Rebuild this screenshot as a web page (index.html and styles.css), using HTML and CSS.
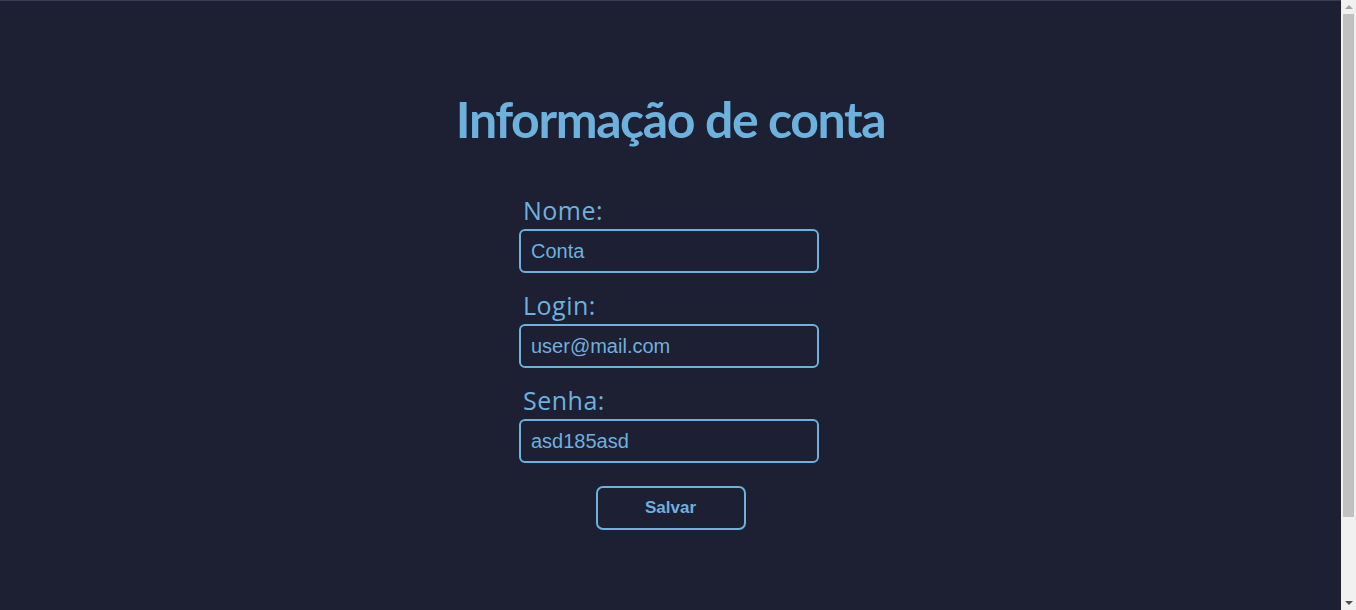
FILE: index.html
```html
<!DOCTYPE html>
<html lang="pt">
<head>
<meta charset="utf-8">
<title>Informação de conta</title>
<link rel="stylesheet" href="styles.css">
</head>
<body>
<main class="page">
  <h1 class="title">Informação de conta</h1>
  <form class="account-form">
    <div class="field">
      <label class="field-label" for="nome">Nome:</label>
      <input class="field-input" id="nome" type="text" value="Conta">
    </div>
    <div class="field">
      <label class="field-label" for="login">Login:</label>
      <input class="field-input" id="login" type="text" value="user@mail.com">
    </div>
    <div class="field">
      <label class="field-label" for="senha">Senha:</label>
      <input class="field-input" id="senha" type="text" value="asd185asd">
    </div>
    <button class="save-button" type="button">Salvar</button>
  </form>
</main>
<div class="scrollbar" aria-hidden="true">
  <div class="scroll-arrow scroll-arrow-up"></div>
  <div class="scroll-track"><div class="scroll-thumb"></div></div>
  <div class="scroll-arrow scroll-arrow-down"></div>
</div>
</body>
</html>
```

FILE: styles.css
```css
html, body {
  margin: 0;
  padding: 0;
  background: #1d1f33;
}
body {
  border-top: 1px solid #3b3d55;
  color: #6db1dd;
  font-family: "Open Sans", "Noto Sans", sans-serif;
}
.page {
  min-height: 705px;
  margin-right: 15px;
  display: flex;
  flex-direction: column;
  align-items: center;
  padding-top: 84px;
  box-sizing: border-box;
}
.title {
  margin: 0;
  font-family: "Lato", "Open Sans", sans-serif;
  font-size: 50px;
  font-weight: 700;
  line-height: 68px;
  letter-spacing: -1.4px;
  color: #6db1dd;
}
.account-form {
  margin-top: 41px;
  display: flex;
  flex-direction: column;
  align-items: center;
}
.field {
  display: flex;
  flex-direction: column;
  width: 300px;
  margin-bottom: 16px;
  margin-right: 3px;
}
.field-label {
  font-size: 25px;
  line-height: 32px;
  letter-spacing: 0.5px;
  padding-left: 4px;
  margin-bottom: 3px;
}
.field-input {
  box-sizing: border-box;
  width: 300px;
  height: 44px;
  border: 2px solid #6db1dd;
  border-radius: 6px;
  background: #1d1f33;
  color: #6db1dd;
  font-family: "Liberation Sans", Arial, sans-serif;
  font-size: 20px;
  padding: 0 10px;
  outline: none;
}
.save-button {
  margin-top: 7px;
  width: 150px;
  height: 44px;
  border: 2px solid #6db1dd;
  border-radius: 7px;
  background: transparent;
  color: #6db1dd;
  font-family: "Liberation Sans", Arial, sans-serif;
  font-weight: 700;
  font-size: 17px;
  cursor: pointer;
}
.scrollbar {
  position: fixed;
  top: 0;
  right: 0;
  bottom: 0;
  width: 15px;
  background: #f1f1f1;
  display: flex;
  flex-direction: column;
}
.scroll-arrow {
  height: 14px;
  flex: none;
  position: relative;
}
.scroll-arrow::after {
  content: "";
  position: absolute;
  left: 4px;
  width: 0;
  height: 0;
  border-left: 4px solid transparent;
  border-right: 4px solid transparent;
}
.scroll-arrow-up::after {
  top: 5px;
  border-bottom: 4px solid #a3a3a3;
}
.scroll-arrow-down::after {
  top: 5px;
  border-top: 4px solid #505050;
}
.scroll-track {
  flex: 1;
  padding: 0 2px;
}
.scroll-thumb {
  height: 503px;
  background: #c1c1c1;
}
```
